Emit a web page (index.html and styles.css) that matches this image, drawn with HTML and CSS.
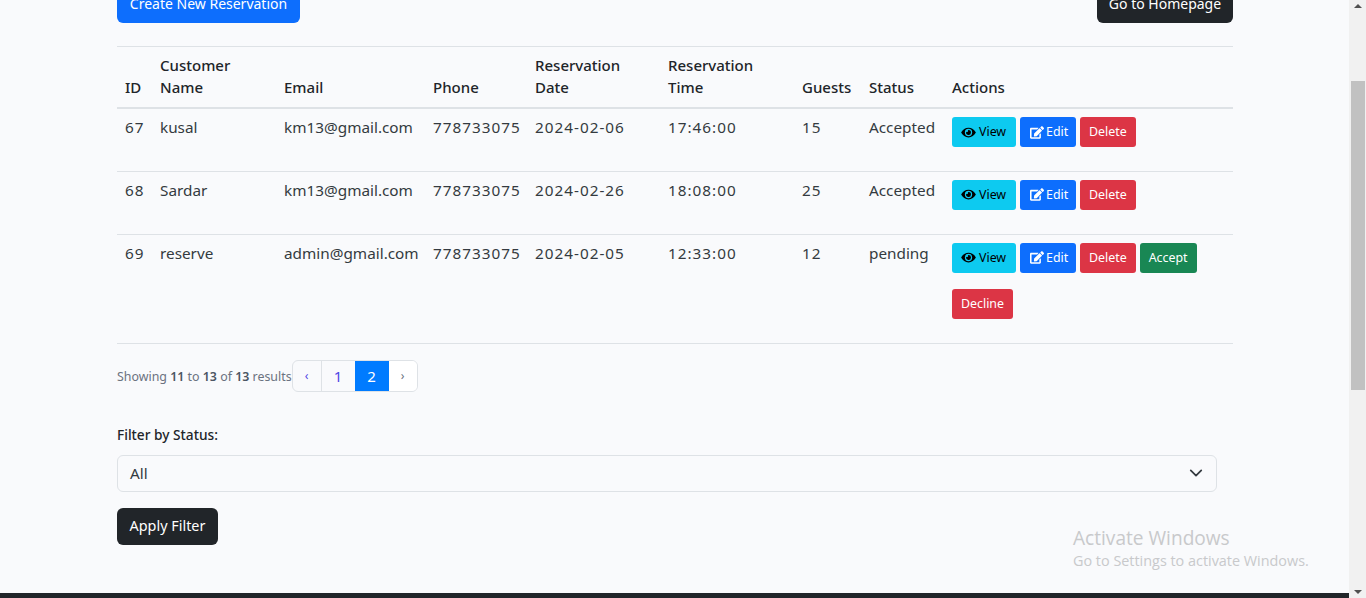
FILE: index.html
```html
<!DOCTYPE html>
<html lang="en">

<head>
    <meta charset="UTF-8">
    <meta name="viewport" content="width=device-width, initial-scale=1.0">
    <title>Reservations</title>
    <link rel="stylesheet" href="styles.css">
</head>

<body>
    <svg class="defs" aria-hidden="true">
        <symbol id="icon-eye" viewBox="0 0 576 512">
            <path d="M572.52 241.4C518.29 135.59 410.93 64 288 64S57.68 135.64 3.48 241.41a32.35 32.35 0 0 0 0 29.19C57.71 376.41 165.07 448 288 448s230.32-71.64 284.52-177.41a32.35 32.35 0 0 0 0-29.19zM288 400a144 144 0 1 1 144-144 143.93 143.93 0 0 1-144 144zm0-240a95.31 95.31 0 0 0-25.31 3.79 47.85 47.85 0 0 1-66.9 66.9A95.78 95.78 0 1 0 288 160z"></path>
        </symbol>
        <symbol id="icon-edit" viewBox="0 0 576 512">
            <path d="M402.6 83.2l90.2 90.2c3.8 3.8 3.8 10 0 13.8L274.4 405.6l-92.8 10.3c-12.4 1.4-22.9-9.1-21.5-21.5l10.3-92.8L388.8 83.2c3.8-3.8 10-3.8 13.8 0zm162-22.9l-48.8-48.8c-15.2-15.2-39.9-15.2-55.2 0l-35.4 35.4c-3.8 3.8-3.8 10 0 13.8l90.2 90.2c3.8 3.8 10 3.8 13.8 0l35.4-35.4c15.2-15.3 15.2-40 0-55.2zM384 346.2V448H64V128h229.8c3.2 0 6.2-1.3 8.5-3.5l40-40c7.6-7.6 2.2-20.5-8.5-20.5H48C21.5 64 0 85.5 0 112v352c0 26.5 21.5 48 48 48h352c26.5 0 48-21.5 48-48V306.2c0-10.7-12.9-16-20.5-8.5l-40 40c-2.2 2.3-3.5 5.3-3.5 8.5z"></path>
        </symbol>
    </svg>

    <div class="page">
        <div class="content">
            <main class="container">
                <div class="top-actions">
                    <a class="btn btn-primary btn-create" href="#">Create New Reservation</a>
                    <a class="btn btn-dark btn-home" href="#">Go to Homepage</a>
                </div>

                <table class="table">
                    <colgroup>
                        <col class="col-id">
                        <col class="col-name">
                        <col class="col-email">
                        <col class="col-phone">
                        <col class="col-date">
                        <col class="col-time">
                        <col class="col-guests">
                        <col class="col-status">
                        <col>
                    </colgroup>
                    <thead>
                        <tr>
                            <th>ID</th>
                            <th>Customer Name</th>
                            <th>Email</th>
                            <th>Phone</th>
                            <th>Reservation Date</th>
                            <th>Reservation Time</th>
                            <th>Guests</th>
                            <th>Status</th>
                            <th>Actions</th>
                        </tr>
                    </thead>
                    <tbody>
                        <tr>
                            <td class="num">67</td>
                            <td>kusal</td>
                            <td>km13@gmail.com</td>
                            <td class="num">778733075</td>
                            <td class="num">2024-02-06</td>
                            <td class="num">17:46:00</td>
                            <td class="num">15</td>
                            <td>Accepted</td>
                            <td class="actions">
                                <div class="action-list">
                                    <a class="btn-sm btn-info btn-view" href="#"><svg class="icon"><use href="#icon-eye"></use></svg>View</a>
                                    <a class="btn-sm btn-primary btn-edit" href="#"><svg class="icon icon-pen"><use href="#icon-edit"></use></svg>Edit</a>
                                    <a class="btn-sm btn-danger" href="#">Delete</a>
                                </div>
                            </td>
                        </tr>
                        <tr>
                            <td class="num">68</td>
                            <td>Sardar</td>
                            <td>km13@gmail.com</td>
                            <td class="num">778733075</td>
                            <td class="num">2024-02-26</td>
                            <td class="num">18:08:00</td>
                            <td class="num">25</td>
                            <td>Accepted</td>
                            <td class="actions">
                                <div class="action-list">
                                    <a class="btn-sm btn-info btn-view" href="#"><svg class="icon"><use href="#icon-eye"></use></svg>View</a>
                                    <a class="btn-sm btn-primary btn-edit" href="#"><svg class="icon icon-pen"><use href="#icon-edit"></use></svg>Edit</a>
                                    <a class="btn-sm btn-danger" href="#">Delete</a>
                                </div>
                            </td>
                        </tr>
                        <tr>
                            <td class="num">69</td>
                            <td>reserve</td>
                            <td>admin@gmail.com</td>
                            <td class="num">778733075</td>
                            <td class="num">2024-02-05</td>
                            <td class="num">12:33:00</td>
                            <td class="num">12</td>
                            <td>pending</td>
                            <td class="actions">
                                <div class="action-list">
                                    <a class="btn-sm btn-info btn-view" href="#"><svg class="icon"><use href="#icon-eye"></use></svg>View</a>
                                    <a class="btn-sm btn-primary btn-edit" href="#"><svg class="icon icon-pen"><use href="#icon-edit"></use></svg>Edit</a>
                                    <a class="btn-sm btn-danger" href="#">Delete</a>
                                    <a class="btn-sm btn-success" href="#">Accept</a>
                                    <a class="btn-sm btn-danger" href="#">Decline</a>
                                </div>
                            </td>
                        </tr>
                    </tbody>
                </table>

                <nav class="pager">
                    <p class="pager-info">Showing <b>11</b> to <b>13</b> of <b>13</b> results</p>
                    <ul class="pagination">
                        <li class="page-prev"><a href="#">‹</a></li>
                        <li class="page-one"><a href="#">1</a></li>
                        <li class="page-two active"><a href="#">2</a></li>
                        <li class="page-next"><a href="#">›</a></li>
                    </ul>
                </nav>

                <form class="filter">
                    <label class="filter-label">Filter by Status:</label>
                    <div class="select">
                        <span>All</span>
                        <svg class="chevron" viewBox="0 0 16 16"><path d="M2 5l6 6 6-6" fill="none" stroke="#343a40" stroke-width="2" stroke-linecap="round" stroke-linejoin="round"></path></svg>
                    </div>
                    <button class="btn btn-dark btn-apply" type="button">Apply Filter</button>
                </form>
            </main>
            <footer class="footer"></footer>
        </div>

        <div class="scrollbar">
            <span class="arrow arrow-up"></span>
            <div class="track"><div class="thumb"></div></div>
            <span class="arrow arrow-down"></span>
        </div>
    </div>

    <div class="watermark">
        <div class="watermark-title">Activate Windows</div>
        <div class="watermark-sub">Go to Settings to activate Windows.</div>
    </div>
</body>

</html>
```

FILE: styles.css
```css
* {
    box-sizing: border-box;
}

html,
body {
    margin: 0;
    height: 100%;
    overflow: hidden;
}

body {
    background: #f9fafc;
    color: #212529;
    font-family: "Noto Sans", "Liberation Sans", sans-serif;
    font-size: 15.3px;
    line-height: 22px;
}

a {
    text-decoration: none;
}

.defs {
    display: none;
}

.page {
    display: flex;
    height: 598px;
    overflow: hidden;
}

.content {
    flex: 1;
    display: flex;
    flex-direction: column;
    height: 598px;
}

.container {
    flex: 1;
    width: 1116px;
    margin-left: 117px;
    margin-top: -15px;
}

.top-actions {
    display: flex;
    justify-content: space-between;
    margin-bottom: 23px;
}

.btn {
    display: inline-flex;
    align-items: center;
    justify-content: center;
    height: 38px;
    border: 0;
    border-radius: 6px;
    font: inherit;
    font-size: 14px;
    white-space: nowrap;
}

.btn-create {
    width: 183px;
}

.btn-home {
    width: 136px;
}

.btn-primary {
    background: #0d6efd;
    color: #fff;
}

.btn-dark {
    background: #212529;
    color: #fff;
}

.btn-info {
    background: #0dcaf0;
    color: #000;
}

.btn-danger {
    background: #dc3545;
    color: #fff;
}

.btn-success {
    background: #198754;
    color: #fff;
}

.table {
    width: 100%;
    table-layout: fixed;
    border-collapse: collapse;
    border-top: 1px solid #dee2e6;
}

.col-id { width: 35px; }
.col-name { width: 124px; }
.col-email { width: 149px; }
.col-phone { width: 102px; }
.col-date { width: 133px; }
.col-time { width: 134px; }
.col-guests { width: 67px; }
.col-status { width: 83px; }

.table th {
    padding: 7px 8px 9px;
    border-bottom: 2px solid #dee2e6;
    font-size: 15px;
    font-weight: 500;
    text-align: left;
    vertical-align: bottom;
}

.table td {
    padding: 7px 8px 8px;
    height: 63px;
    border-bottom: 1px solid #dee2e6;
    vertical-align: top;
    white-space: nowrap;
    color: #343a40;
}

.table td.num {
    letter-spacing: 1px;
}

.table td.actions {
    padding: 8px 8px 0;
}

.action-list {
    display: flex;
    flex-wrap: wrap;
    gap: 16px 4px;
}

.table tbody tr:last-child .action-list {
    padding-bottom: 24px;
}

.btn-sm {
    display: inline-flex;
    align-items: center;
    height: 30px;
    padding: 0 9px;
    border-radius: 3px;
    font-size: 12.4px;
}

.btn-view {
    width: 64px;
}

.btn-edit {
    width: 56px;
    padding-right: 0;
}

.icon {
    width: 15px;
    height: 13px;
    margin-right: 3px;
    fill: currentColor;
}

.icon-pen {
    width: 14px;
    margin-left: 1px;
    margin-right: 2px;
}

.pager {
    display: flex;
    align-items: center;
    margin-top: 16px;
}

.pager-info {
    margin: 0;
    padding-top: 3px;
    color: #6b7280;
    font-size: 12.4px;
    white-space: nowrap;
}

.pager-info b {
    font-weight: 600;
    color: #4b5563;
}

.pagination {
    display: flex;
    margin: 0;
    padding: 0;
    list-style: none;
    height: 32px;
    border: 1px solid #dee2e6;
    border-radius: 6px;
    overflow: hidden;
}

.pagination a {
    display: flex;
    align-items: center;
    justify-content: center;
    height: 100%;
    color: #4f46e5;
}

.page-prev { width: 29px; font-size: 12px; border-right: 1px solid #dee2e6; }
.page-one { width: 33px; font-size: 15px; }
.page-two { width: 34px; font-size: 15px; }
.page-next { width: 28px; font-size: 12px; background: #fff; }
.page-next a { color: #6b7280; }

.active {
    background: #007bff;
}

.active a {
    color: #fff;
}

.filter {
    margin-top: 32px;
}

.filter-label {
    display: block;
    margin-bottom: 9px;
    font-size: 13.7px;
    font-weight: 500;
}

.select {
    display: flex;
    align-items: center;
    justify-content: space-between;
    width: 1100px;
    height: 37px;
    padding: 0 13px 0 12px;
    border: 1px solid #dee2e6;
    border-radius: 6px;
    color: #343a40;
}

.chevron {
    width: 14px;
    height: 14px;
}

.btn-apply {
    margin-top: 16px;
    height: 37px;
    width: 101px;
    font-size: 14.4px;
}

.footer {
    height: 5px;
    background: #212529;
}

.scrollbar {
    display: flex;
    flex-direction: column;
    align-items: center;
    width: 17px;
    background: #f1f1f1;
}

.track {
    flex: 1;
    width: 100%;
    padding: 73px 1px 0 2px;
}

.thumb {
    height: 309px;
    background: #c1c1c1;
}

.arrow {
    width: 0;
    height: 0;
    flex: none;
    border-left: 4px solid transparent;
    border-right: 4px solid transparent;
}

.arrow-up {
    margin-top: 4px;
    border-bottom: 4px solid #505050;
}

.arrow-down {
    margin-bottom: 4px;
    border-top: 4px solid #505050;
}

/* windows watermark sits over the page */
.watermark {
    position: absolute;
    left: 1073px;
    top: 525px;
    color: #c8c9cb;
    font-family: "Open Sans", "Liberation Sans", sans-serif;
    pointer-events: none;
}

.watermark-title {
    font-size: 19.1px;
    line-height: 26px;
}

.watermark-sub {
    font-size: 14.4px;
    line-height: 19px;
}
```
